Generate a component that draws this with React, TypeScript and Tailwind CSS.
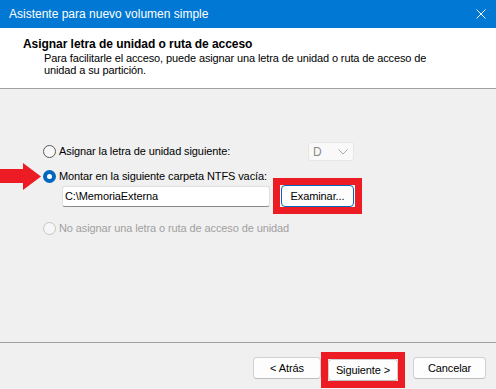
import React from "react";

const font = { fontFamily: '"Liberation Sans", Arial, sans-serif' };

function Radio({ checked, disabled }: { checked?: boolean; disabled?: boolean }) {
  if (checked) {
    return (
      <span className="flex h-[13px] w-[13px] shrink-0 items-center justify-center rounded-full bg-[#0067c0]">
        <span className="h-[5px] w-[5px] rounded-full bg-white" />
      </span>
    );
  }
  return (
    <span
      className={
        "h-[13px] w-[13px] shrink-0 rounded-full border bg-[#f7f7f7] " +
        (disabled ? "border-[#c5c5c5]" : "border-[#5a5a5a]")
      }
    />
  );
}

function Btn({ children, focused }: { children: React.ReactNode; focused?: boolean }) {
  return (
    <div
      className={
        "flex h-[22px] items-center justify-center rounded-[4px] border bg-[#fdfdfd] text-[11px] tracking-[-0.1px] text-black " +
        (focused ? "border-[#0067c0]" : "border-[#d0d0d0] border-b-[#bdbdbd]")
      }
    >
      {children}
    </div>
  );
}

export default function App() {
  return (
    <div className="relative flex h-[389px] w-[496px] flex-col overflow-hidden bg-[#f0f0f0]" style={font}>
      {/* title bar */}
      <div className="flex h-[28px] shrink-0 items-center justify-between bg-[#0078d4] pl-[9px] pr-[10px] text-white">
        <span className="text-[12px]">Asistente para nuevo volumen simple</span>
        <svg width="10" height="10" viewBox="0 0 10 10">
          <path d="M0.5 0.5 L9.5 9.5 M9.5 0.5 L0.5 9.5" stroke="white" strokeWidth="1" />
        </svg>
      </div>

      {/* header */}
      <div className="h-[61px] shrink-0 border-b border-[#a0a0a0] bg-white pl-[23px] pt-[9px] text-black">
        <div className="text-[12px] font-bold leading-[15px] tracking-[-0.05px]">
          Asignar letra de unidad o ruta de acceso
        </div>
        <div className="pl-[21px] text-[11px] leading-[12px] tracking-[-0.12px]">
          <div>Para facilitarle el acceso, puede asignar una letra de unidad o ruta de acceso de</div>
          <div>unidad a su partición.</div>
        </div>
      </div>

      {/* body */}
      <div className="h-[254px] shrink-0 border-b border-[#a0a0a0] pl-[43px] pt-[53px] text-[11px] tracking-[-0.1px] text-black">
        <div className="flex h-[19px] items-center">
          <Radio />
          <span className="ml-[3px] w-[249px]">Asignar la letra de unidad siguiente:</span>
          <div className="flex h-[19px] w-[46px] items-center justify-between rounded-[3px] border border-[#e6e6e6] bg-[#f9f9f9] pl-[4px] pr-[5px] text-[12px] text-[#8a8a8a]">
            <span>D</span>
            <svg width="10" height="6" viewBox="0 0 10 6">
              <path d="M0.5 0.5 L5 5 L9.5 0.5" stroke="#a8a8a8" fill="none" strokeWidth="1" />
            </svg>
          </div>
        </div>
        <div className="mt-[9px] flex h-[13px] items-center">
          <Radio checked />
          <span className="ml-[3px]">Montar en la siguiente carpeta NTFS vacía:</span>
        </div>
        <div className="-mt-[5px] flex h-[36px] items-center">
          <div className="ml-[19px] flex h-[21px] w-[208px] items-center rounded-[3px] border border-[#e0e0e0] border-b-[#8a8a8a] bg-white pl-[2px]">
            C:\MemoriaExterna
          </div>
          <div className="ml-[3px] flex h-[36px] w-[89px] items-center justify-center border-[7px] border-[#ed1c24] bg-[#fafafa]">
            <div className="w-[73px]">
              <Btn focused>Examinar...</Btn>
            </div>
          </div>
        </div>
        <div className="mt-[8px] flex h-[13px] items-center text-[#a0a0a0]">
          <Radio disabled />
          <span className="ml-[3px]">No asignar una letra o ruta de acceso de unidad</span>
        </div>
      </div>

      {/* footer */}
      <div className="flex shrink-0 items-start pl-[253px] pt-[9px]">
        <div className="mt-[5px] w-[68px]">
          <Btn>&lt; Atrás</Btn>
        </div>
        <div className="h-[36px] w-[84px] border-[7px] border-[#ed1c24] bg-[#f0f0f0]">
          <Btn>Siguiente &gt;</Btn>
        </div>
        <div className="ml-[8px] mt-[5px] w-[73px]">
          <Btn>Cancelar</Btn>
        </div>
      </div>

      {/* red arrow annotation */}
      <svg className="absolute left-0 top-[163px]" width="42" height="27" viewBox="0 0 42 27">
        <polygon points="0,6 23,6 23,0 41,13.5 23,27 23,20 0,20" fill="#ed1c24" />
      </svg>
    </div>
  );
}
